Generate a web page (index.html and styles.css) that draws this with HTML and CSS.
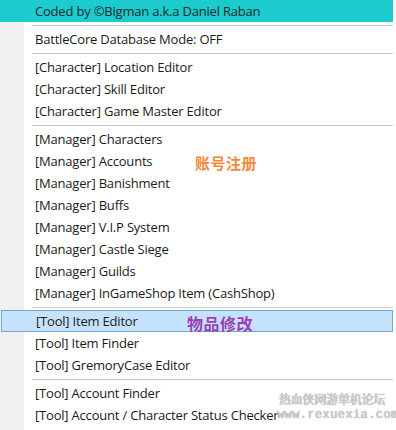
FILE: index.html
```html
<!DOCTYPE html>
<html lang="zh-CN">
  <head>
    <meta charset="UTF-8">
    <title>BattleCore Menu</title>
    <link rel="stylesheet" href="styles.css">
  </head>
  <body>
    <div class="menu">
      <div class="title">Coded by ©Bigman a.k.a Daniel Raban</div>
      <div class="sep"></div>
      <div class="item">BattleCore Database Mode: OFF</div>
      <div class="sep"></div>
      <div class="item">[Character] Location Editor</div>
      <div class="item">[Character] Skill Editor</div>
      <div class="item">[Character] Game Master Editor</div>
      <div class="sep"></div>
      <div class="item">[Manager] Characters</div>
      <div class="item">[Manager] Accounts</div>
      <div class="item">[Manager] Banishment</div>
      <div class="item">[Manager] Buffs</div>
      <div class="item">[Manager] V.I.P System</div>
      <div class="item">[Manager] Castle Siege</div>
      <div class="item">[Manager] Guilds</div>
      <div class="item">[Manager] InGameShop Item (CashShop)</div>
      <div class="sep"></div>
      <div class="item active">[Tool] Item Editor</div>
      <div class="item">[Tool] Item Finder</div>
      <div class="item">[Tool] GremoryCase Editor</div>
      <div class="sep"></div>
      <div class="item">[Tool] Account Finder</div>
      <div class="item">[Tool] Account / Character Status Checker</div>

      <!-- 标注 -->
      <div class="note note-orange">账号注册</div>
      <div class="note note-purple">物品修改</div>
      <div class="mark">
        <div class="mark-cn">热血侠网游单机论坛</div>
        <div class="mark-url">www.rexuexia.com</div>
      </div>
    </div>
  </body>
</html>
```

FILE: styles.css
```css
* {
    margin: 0;
    padding: 0;
    box-sizing: border-box;
}
body {
    background: #ffffff;
    font-family: "Open Sans", "Noto Sans", "Noto Sans CJK SC", sans-serif;
    font-size: 13px;
    letter-spacing: -0.2px;
    color: #1a1a1a;
}
.menu {
    position: relative;
    width: 393px;
    height: 430px;
    background: linear-gradient(to right, #f1f1f1 24px, #ffffff 24px);
}
.title {
    height: 22px;
    line-height: 22px;
    padding-left: 35px;
    background: #1ccbcd;
    color: #1b2a2a;
}
.item {
    height: 22px;
    line-height: 22px;
    padding-left: 35px;
    white-space: nowrap;
}
.item.active {
    margin-left: 1px;
    padding-left: 34px;
    background: #c6e2fb;
    border: 1px solid #6fa9cf;
    line-height: 20px;
}
.sep {
    height: 6px;
    margin-left: 32px;
    padding-top: 3px;
}
.sep::after {
    content: '';
    display: block;
    border-top: 1px solid #c9c9c9;
}
.note {
    position: absolute;
    font-family: "Noto Sans CJK SC", sans-serif;
    font-weight: bold;
    letter-spacing: 0.5px;
}
.note-orange {
    left: 195px;
    top: 152px;
    font-size: 15px;
    color: #f2893a;
}
.note-purple {
    left: 187px;
    top: 311px;
    font-size: 16px;
    color: #9a40b4;
}
.mark {
    position: absolute;
    left: 277px;
    top: 391px;
    color: #d4d4d4;
    text-shadow: 0 0 1px #6e6e6e;
}
.mark-cn {
    font-family: "Noto Sans CJK SC", sans-serif;
    font-size: 12px;
    line-height: 16px;
    padding-left: 2px;
}
.mark-url {
    font-family: "Liberation Mono", monospace;
    font-size: 12px;
    line-height: 16px;
    letter-spacing: 0.4px;
}
```
